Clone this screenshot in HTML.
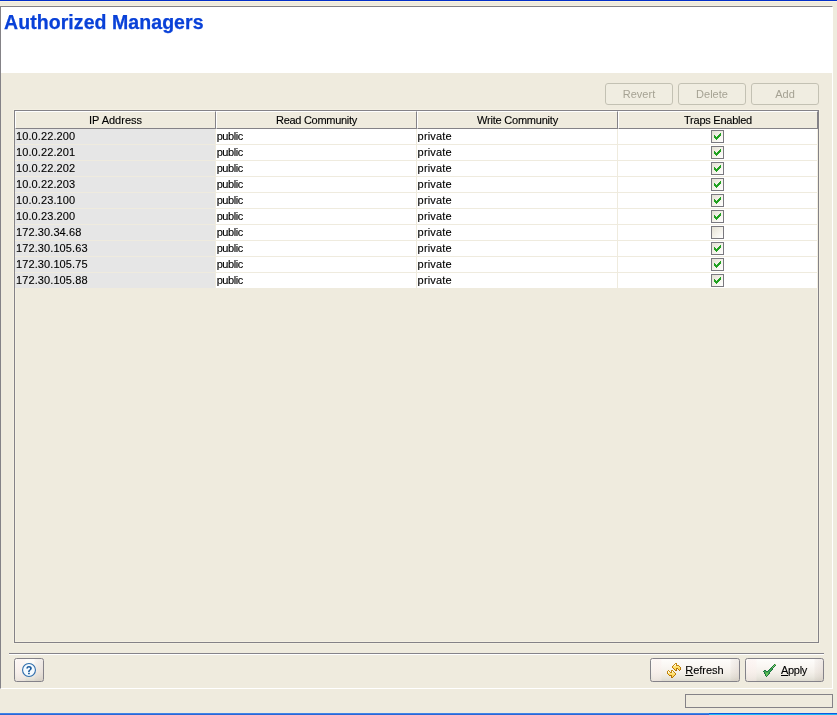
<!DOCTYPE html>
<html><head><meta charset="utf-8"><title>Authorized Managers</title>
<style>
html,body{margin:0;padding:0;}
body{width:837px;height:715px;position:relative;overflow:hidden;background:#efebde;font-family:"Liberation Sans",sans-serif;font-size:11px;color:#000;-webkit-text-stroke:0.12px #000;}
.abs{position:absolute;}
#topblue{left:0;top:0;width:837px;height:1px;background:#0430c9;box-shadow:0 1px 0 #fcf4e0;}
#panel{left:0;top:6px;width:833px;height:683px;box-sizing:border-box;border-top:1px solid #848287;border-left:1px solid #848287;border-right:1px solid #fff;border-bottom:1px solid #fff;}
#hdr{left:1px;top:7px;width:831px;height:66px;background:#fff;}
#title{left:4px;top:11px;letter-spacing:0.07px;font-weight:bold;font-size:19.5px;line-height:22px;color:#0941d8;white-space:nowrap;-webkit-text-stroke:0.25px #0941d8;}
.dbtn{top:83px;width:68px;height:22px;box-sizing:border-box;border:1px solid #c3c1b3;border-radius:3px;background:#f0ede1;color:#a5a293;-webkit-text-stroke:0;text-align:center;line-height:20px;}
#tbl{left:14px;top:110px;width:805px;height:533px;box-sizing:border-box;border:1px solid #848287;box-shadow:0 0 0 1px #f4f0e3,inset 0 0 0 1px #f4f0e3;}
.th{top:111px;height:18px;box-sizing:border-box;border-top:1px solid #fff;border-left:1px solid #fff;border-right:1px solid #848287;border-bottom:1px solid #848287;background:#efebde;text-align:center;line-height:17px;white-space:nowrap;}
.row{left:15px;width:803px;height:16px;}
.c{top:0;height:15px;line-height:14px;white-space:nowrap;box-sizing:border-box;padding-left:2px;background:#fff;}
.c1{left:0;width:200px;background:#e6e6e6;padding-left:1px;letter-spacing:0.1px;}
.c2{left:201px;width:200px;letter-spacing:-0.45px;padding-left:0.7px;}
.c3{left:402px;width:200px;padding-left:0.6px;letter-spacing:0.18px;}
.c4{left:603px;width:199px;}
.cb{position:absolute;left:93px;top:1px;width:13px;height:13px;box-sizing:border-box;border:1px solid #7a797f;background:linear-gradient(135deg,#e4e1d4 0%,#f3f1e9 50%,#ffffff 100%);}
.cb svg{position:absolute;left:2px;top:2px;}
#sep{left:9px;top:653px;width:815px;height:1px;background:#85838a;border-bottom:1px solid #fff;}
.btn{top:658px;height:24px;box-sizing:border-box;border:1px solid #848289;border-radius:2.5px;background:linear-gradient(to right,rgba(252,238,236,0.0) 0,rgba(252,238,236,0.45) 2px,rgba(252,238,236,0.35) 10px,rgba(255,255,255,0) 11px,rgba(255,255,255,0) calc(100% - 9px),rgba(170,140,130,0.07) calc(100% - 8px),rgba(160,135,125,0.16) 100%),linear-gradient(180deg,#fefdfb 0%,#f9f6f2 35%,#f4f0ea 60%,#eae7df 82%,#dddad0 100%);}
.bt{top:4px;line-height:14px;white-space:nowrap;}
#status{left:685px;top:694px;width:148px;height:14px;box-sizing:border-box;border:1px solid #848287;}
</style></head><body>
<div id="w" class="abs" style="left:0;top:0;width:837px;height:715px;will-change:transform">
<div id="topblue" class="abs"></div>
<div class="abs" style="left:0;top:5px;width:833px;height:1px;background:#f3efe2"></div>
<div id="panel" class="abs"></div>
<div id="hdr" class="abs"></div>
<div id="title" class="abs">Authorized Managers</div>

<div class="abs dbtn" style="left:605px">Revert</div>
<div class="abs dbtn" style="left:678px">Delete</div>
<div class="abs dbtn" style="left:751px">Add</div>

<div id="tbl" class="abs"></div>
<div class="abs th" style="left:15px;width:201px">IP Address</div>
<div class="abs th" style="left:216px;width:201px;letter-spacing:-0.29px">Read Community</div>
<div class="abs th" style="left:417px;width:201px;letter-spacing:-0.22px">Write Community</div>
<div class="abs th" style="left:618px;width:200px;letter-spacing:-0.25px">Traps Enabled</div>
<div id="rows">
<div class="abs row" style="top:129px"><div class="abs c c1">10.0.22.200</div><div class="abs c c2">public</div><div class="abs c c3">private</div><div class="abs c c4"><span class="cb"><svg width="7" height="7" viewBox="0 0 7 7" shape-rendering="crispEdges"><path fill="#21a121" d="M6 0h1v3h-1zM5 1h1v3h-1zM4 2h1v3h-1zM3 3h1v3h-1zM2 4h1v3h-1zM1 3h1v3h-1zM0 2h1v3h-1z"/></svg></span></div></div>
<div class="abs row" style="top:145px"><div class="abs c c1">10.0.22.201</div><div class="abs c c2">public</div><div class="abs c c3">private</div><div class="abs c c4"><span class="cb"><svg width="7" height="7" viewBox="0 0 7 7" shape-rendering="crispEdges"><path fill="#21a121" d="M6 0h1v3h-1zM5 1h1v3h-1zM4 2h1v3h-1zM3 3h1v3h-1zM2 4h1v3h-1zM1 3h1v3h-1zM0 2h1v3h-1z"/></svg></span></div></div>
<div class="abs row" style="top:161px"><div class="abs c c1">10.0.22.202</div><div class="abs c c2">public</div><div class="abs c c3">private</div><div class="abs c c4"><span class="cb"><svg width="7" height="7" viewBox="0 0 7 7" shape-rendering="crispEdges"><path fill="#21a121" d="M6 0h1v3h-1zM5 1h1v3h-1zM4 2h1v3h-1zM3 3h1v3h-1zM2 4h1v3h-1zM1 3h1v3h-1zM0 2h1v3h-1z"/></svg></span></div></div>
<div class="abs row" style="top:177px"><div class="abs c c1">10.0.22.203</div><div class="abs c c2">public</div><div class="abs c c3">private</div><div class="abs c c4"><span class="cb"><svg width="7" height="7" viewBox="0 0 7 7" shape-rendering="crispEdges"><path fill="#21a121" d="M6 0h1v3h-1zM5 1h1v3h-1zM4 2h1v3h-1zM3 3h1v3h-1zM2 4h1v3h-1zM1 3h1v3h-1zM0 2h1v3h-1z"/></svg></span></div></div>
<div class="abs row" style="top:193px"><div class="abs c c1">10.0.23.100</div><div class="abs c c2">public</div><div class="abs c c3">private</div><div class="abs c c4"><span class="cb"><svg width="7" height="7" viewBox="0 0 7 7" shape-rendering="crispEdges"><path fill="#21a121" d="M6 0h1v3h-1zM5 1h1v3h-1zM4 2h1v3h-1zM3 3h1v3h-1zM2 4h1v3h-1zM1 3h1v3h-1zM0 2h1v3h-1z"/></svg></span></div></div>
<div class="abs row" style="top:209px"><div class="abs c c1">10.0.23.200</div><div class="abs c c2">public</div><div class="abs c c3">private</div><div class="abs c c4"><span class="cb"><svg width="7" height="7" viewBox="0 0 7 7" shape-rendering="crispEdges"><path fill="#21a121" d="M6 0h1v3h-1zM5 1h1v3h-1zM4 2h1v3h-1zM3 3h1v3h-1zM2 4h1v3h-1zM1 3h1v3h-1zM0 2h1v3h-1z"/></svg></span></div></div>
<div class="abs row" style="top:225px"><div class="abs c c1">172.30.34.68</div><div class="abs c c2">public</div><div class="abs c c3">private</div><div class="abs c c4"><span class="cb"></span></div></div>
<div class="abs row" style="top:241px"><div class="abs c c1">172.30.105.63</div><div class="abs c c2">public</div><div class="abs c c3">private</div><div class="abs c c4"><span class="cb"><svg width="7" height="7" viewBox="0 0 7 7" shape-rendering="crispEdges"><path fill="#21a121" d="M6 0h1v3h-1zM5 1h1v3h-1zM4 2h1v3h-1zM3 3h1v3h-1zM2 4h1v3h-1zM1 3h1v3h-1zM0 2h1v3h-1z"/></svg></span></div></div>
<div class="abs row" style="top:257px"><div class="abs c c1">172.30.105.75</div><div class="abs c c2">public</div><div class="abs c c3">private</div><div class="abs c c4"><span class="cb"><svg width="7" height="7" viewBox="0 0 7 7" shape-rendering="crispEdges"><path fill="#21a121" d="M6 0h1v3h-1zM5 1h1v3h-1zM4 2h1v3h-1zM3 3h1v3h-1zM2 4h1v3h-1zM1 3h1v3h-1zM0 2h1v3h-1z"/></svg></span></div></div>
<div class="abs row" style="top:273px"><div class="abs c c1">172.30.105.88</div><div class="abs c c2">public</div><div class="abs c c3">private</div><div class="abs c c4"><span class="cb"><svg width="7" height="7" viewBox="0 0 7 7" shape-rendering="crispEdges"><path fill="#21a121" d="M6 0h1v3h-1zM5 1h1v3h-1zM4 2h1v3h-1zM3 3h1v3h-1zM2 4h1v3h-1zM1 3h1v3h-1zM0 2h1v3h-1z"/></svg></span></div></div>
</div>

<div id="sep" class="abs"></div>
<div class="abs btn" id="help" style="left:14px;width:30px"><svg class="abs" style="left:7px;top:4px" width="14" height="14" viewBox="0 0 14 14"><circle cx="7" cy="7" r="6.45" fill="#f4faff" stroke="#2f6dac" stroke-width="1.1"/><path fill="#1c5a9c" d="M4.3,5.6 C4.3,3.9 5.5,3.1 7,3.1 C8.6,3.1 9.8,4 9.8,5.3 C9.8,6.4 9.2,6.9 8.4,7.5 C7.8,7.9 7.7,8.3 7.7,9 L6.1,9 C6.1,7.9 6.4,7.4 7.2,6.8 C7.8,6.3 8.1,6 8.1,5.4 C8.1,4.8 7.7,4.5 7,4.5 C6.3,4.5 5.9,4.9 5.9,5.6 Z M6.1,9.8 h1.7 v1.4 h-1.7 Z"/></svg></div>
<div class="abs btn" id="refresh" style="left:650px;width:90px"><svg class="abs" style="left:16px;top:4px" width="14" height="15" viewBox="0 0 14 15" shape-rendering="crispEdges"><rect x="8" y="0" width="1" height="1" fill="#c88c14"/><rect x="9" y="0" width="1" height="1" fill="#c88c14"/><rect x="7" y="1" width="1" height="1" fill="#c48811"/><rect x="8" y="1" width="1" height="1" fill="#fffbe6"/><rect x="9" y="1" width="1" height="1" fill="#c48811"/><rect x="6" y="2" width="1" height="1" fill="#c1840f"/><rect x="7" y="2" width="1" height="1" fill="#fffbe6"/><rect x="8" y="2" width="1" height="1" fill="#fff2b4"/><rect x="9" y="2" width="1" height="1" fill="#c1840f"/><rect x="10" y="2" width="1" height="1" fill="#c1840f"/><rect x="11" y="2" width="1" height="1" fill="#c1840f"/><rect x="5" y="3" width="1" height="1" fill="#bd800d"/><rect x="6" y="3" width="1" height="1" fill="#ffe37a"/><rect x="7" y="3" width="1" height="1" fill="#ffe37a"/><rect x="8" y="3" width="1" height="1" fill="#ffe37a"/><rect x="9" y="3" width="1" height="1" fill="#ffe37a"/><rect x="10" y="3" width="1" height="1" fill="#ffe37a"/><rect x="11" y="3" width="1" height="1" fill="#ffe37a"/><rect x="12" y="3" width="1" height="1" fill="#bd800d"/><rect x="5" y="4" width="1" height="1" fill="#ba7c0a"/><rect x="6" y="4" width="1" height="1" fill="#ffdd6b"/><rect x="7" y="4" width="1" height="1" fill="#ffdd6b"/><rect x="8" y="4" width="1" height="1" fill="#ffdd6b"/><rect x="9" y="4" width="1" height="1" fill="#ffdd6b"/><rect x="10" y="4" width="1" height="1" fill="#ffdd6b"/><rect x="11" y="4" width="1" height="1" fill="#ffdd6b"/><rect x="12" y="4" width="1" height="1" fill="#ffdd6b"/><rect x="13" y="4" width="1" height="1" fill="#ba7c0a"/><rect x="6" y="5" width="1" height="1" fill="#b67808"/><rect x="7" y="5" width="1" height="1" fill="#ffd85b"/><rect x="8" y="5" width="1" height="1" fill="#ffd85b"/><rect x="9" y="5" width="1" height="1" fill="#b67808"/><rect x="10" y="5" width="1" height="1" fill="#b67808"/><rect x="11" y="5" width="1" height="1" fill="#ffd85b"/><rect x="12" y="5" width="1" height="1" fill="#ffd85b"/><rect x="13" y="5" width="1" height="1" fill="#b67808"/><rect x="7" y="6" width="1" height="1" fill="#b37406"/><rect x="8" y="6" width="1" height="1" fill="#ffd34b"/><rect x="9" y="6" width="1" height="1" fill="#b37406"/><rect x="11" y="6" width="1" height="1" fill="#b37406"/><rect x="12" y="6" width="1" height="1" fill="#ffd34b"/><rect x="13" y="6" width="1" height="1" fill="#b37406"/><rect x="1" y="7" width="1" height="1" fill="#c88c14"/><rect x="4" y="7" width="1" height="1" fill="#c88c14"/><rect x="5" y="7" width="1" height="1" fill="#c88c14"/><rect x="8" y="7" width="1" height="1" fill="#b07004"/><rect x="9" y="7" width="1" height="1" fill="#b07004"/><rect x="12" y="7" width="1" height="1" fill="#b07004"/><rect x="0" y="8" width="1" height="1" fill="#c48811"/><rect x="1" y="8" width="1" height="1" fill="#fffbe6"/><rect x="2" y="8" width="1" height="1" fill="#c48811"/><rect x="4" y="8" width="1" height="1" fill="#c48811"/><rect x="5" y="8" width="1" height="1" fill="#fffbe6"/><rect x="6" y="8" width="1" height="1" fill="#c48811"/><rect x="0" y="9" width="1" height="1" fill="#c1840f"/><rect x="1" y="9" width="1" height="1" fill="#fffbe6"/><rect x="2" y="9" width="1" height="1" fill="#fff2b4"/><rect x="3" y="9" width="1" height="1" fill="#c1840f"/><rect x="4" y="9" width="1" height="1" fill="#c1840f"/><rect x="5" y="9" width="1" height="1" fill="#fff2b4"/><rect x="6" y="9" width="1" height="1" fill="#ffe88a"/><rect x="7" y="9" width="1" height="1" fill="#c1840f"/><rect x="0" y="10" width="1" height="1" fill="#bd800d"/><rect x="1" y="10" width="1" height="1" fill="#ffe37a"/><rect x="2" y="10" width="1" height="1" fill="#ffe37a"/><rect x="3" y="10" width="1" height="1" fill="#ffe37a"/><rect x="4" y="10" width="1" height="1" fill="#ffe37a"/><rect x="5" y="10" width="1" height="1" fill="#ffe37a"/><rect x="6" y="10" width="1" height="1" fill="#ffe37a"/><rect x="7" y="10" width="1" height="1" fill="#ffe37a"/><rect x="8" y="10" width="1" height="1" fill="#bd800d"/><rect x="1" y="11" width="1" height="1" fill="#ba7c0a"/><rect x="2" y="11" width="1" height="1" fill="#ffdd6b"/><rect x="3" y="11" width="1" height="1" fill="#ffdd6b"/><rect x="4" y="11" width="1" height="1" fill="#ffdd6b"/><rect x="5" y="11" width="1" height="1" fill="#ffdd6b"/><rect x="6" y="11" width="1" height="1" fill="#ffdd6b"/><rect x="7" y="11" width="1" height="1" fill="#ffdd6b"/><rect x="8" y="11" width="1" height="1" fill="#ba7c0a"/><rect x="2" y="12" width="1" height="1" fill="#b67808"/><rect x="3" y="12" width="1" height="1" fill="#b67808"/><rect x="4" y="12" width="1" height="1" fill="#b67808"/><rect x="5" y="12" width="1" height="1" fill="#ffd85b"/><rect x="6" y="12" width="1" height="1" fill="#ffd85b"/><rect x="7" y="12" width="1" height="1" fill="#b67808"/><rect x="4" y="13" width="1" height="1" fill="#b37406"/><rect x="5" y="13" width="1" height="1" fill="#ffd34b"/><rect x="6" y="13" width="1" height="1" fill="#b37406"/><rect x="4" y="14" width="1" height="1" fill="#b07004"/><rect x="5" y="14" width="1" height="1" fill="#b07004"/></svg><span class="abs bt" style="left:34.3px;letter-spacing:-0.02px"><u>R</u>efresh</span></div>
<div class="abs btn" id="apply" style="left:745px;width:79px"><svg class="abs" style="left:17px;top:5px" width="13" height="13" viewBox="0 0 13 13" shape-rendering="crispEdges"><rect x="11" y="0" width="1" height="1" fill="#1b7640"/><rect x="12" y="0" width="1" height="1" fill="#a8de80"/><rect x="10" y="1" width="1" height="1" fill="#1b7640"/><rect x="11" y="1" width="1" height="1" fill="#86cf6a"/><rect x="12" y="1" width="1" height="1" fill="#1b7640"/><rect x="9" y="2" width="1" height="1" fill="#1b7640"/><rect x="10" y="2" width="1" height="1" fill="#86cf6a"/><rect x="11" y="2" width="1" height="1" fill="#1b7640"/><rect x="8" y="3" width="1" height="1" fill="#1b7640"/><rect x="9" y="3" width="1" height="1" fill="#86cf6a"/><rect x="10" y="3" width="1" height="1" fill="#1b7640"/><rect x="7" y="4" width="1" height="1" fill="#1b7640"/><rect x="8" y="4" width="1" height="1" fill="#3f9f4c"/><rect x="9" y="4" width="1" height="1" fill="#1b7640"/><rect x="6" y="5" width="1" height="1" fill="#1b7640"/><rect x="7" y="5" width="1" height="1" fill="#3f9f4c"/><rect x="8" y="5" width="1" height="1" fill="#3f9f4c"/><rect x="9" y="5" width="1" height="1" fill="#1b7640"/><rect x="1" y="6" width="1" height="1" fill="#1b7640"/><rect x="2" y="6" width="1" height="1" fill="#1b7640"/><rect x="5" y="6" width="1" height="1" fill="#1b7640"/><rect x="6" y="6" width="1" height="1" fill="#3fa254"/><rect x="7" y="6" width="1" height="1" fill="#3fa254"/><rect x="8" y="6" width="1" height="1" fill="#1b7640"/><rect x="0" y="7" width="1" height="1" fill="#1b7640"/><rect x="1" y="7" width="1" height="1" fill="#3fa254"/><rect x="2" y="7" width="1" height="1" fill="#3fa254"/><rect x="3" y="7" width="1" height="1" fill="#1b7640"/><rect x="4" y="7" width="1" height="1" fill="#1b7640"/><rect x="5" y="7" width="1" height="1" fill="#3fa254"/><rect x="6" y="7" width="1" height="1" fill="#3fa254"/><rect x="7" y="7" width="1" height="1" fill="#1b7640"/><rect x="1" y="8" width="1" height="1" fill="#1b7640"/><rect x="2" y="8" width="1" height="1" fill="#4cae50"/><rect x="3" y="8" width="1" height="1" fill="#4cae50"/><rect x="4" y="8" width="1" height="1" fill="#4cae50"/><rect x="5" y="8" width="1" height="1" fill="#4cae50"/><rect x="6" y="8" width="1" height="1" fill="#1b7640"/><rect x="1" y="9" width="1" height="1" fill="#1b7640"/><rect x="2" y="9" width="1" height="1" fill="#3fa254"/><rect x="3" y="9" width="1" height="1" fill="#6cc458"/><rect x="4" y="9" width="1" height="1" fill="#6cc458"/><rect x="5" y="9" width="1" height="1" fill="#3fa254"/><rect x="6" y="9" width="1" height="1" fill="#1b7640"/><rect x="2" y="10" width="1" height="1" fill="#1b7640"/><rect x="3" y="10" width="1" height="1" fill="#6cc458"/><rect x="4" y="10" width="1" height="1" fill="#6cc458"/><rect x="5" y="10" width="1" height="1" fill="#1b7640"/><rect x="2" y="11" width="1" height="1" fill="#1b7640"/><rect x="3" y="11" width="1" height="1" fill="#6cc458"/><rect x="4" y="11" width="1" height="1" fill="#1b7640"/><rect x="3" y="12" width="1" height="1" fill="#1b7640"/></svg><span class="abs bt" style="left:35px;letter-spacing:-0.3px"><u>A</u>pply</span></div>
<div id="status" class="abs"></div>
<div class="abs" style="left:0;top:713px;width:709px;height:1px;background:#3f83e6"></div>
<div class="abs" style="left:0;top:714px;width:709px;height:1px;background:#2a67d6"></div>
<div class="abs" style="left:709px;top:713px;width:128px;height:1px;background:#0b5ae0"></div>
<div class="abs" style="left:709px;top:714px;width:128px;height:1px;background:#22b4f0"></div>
</div>
</body></html>
